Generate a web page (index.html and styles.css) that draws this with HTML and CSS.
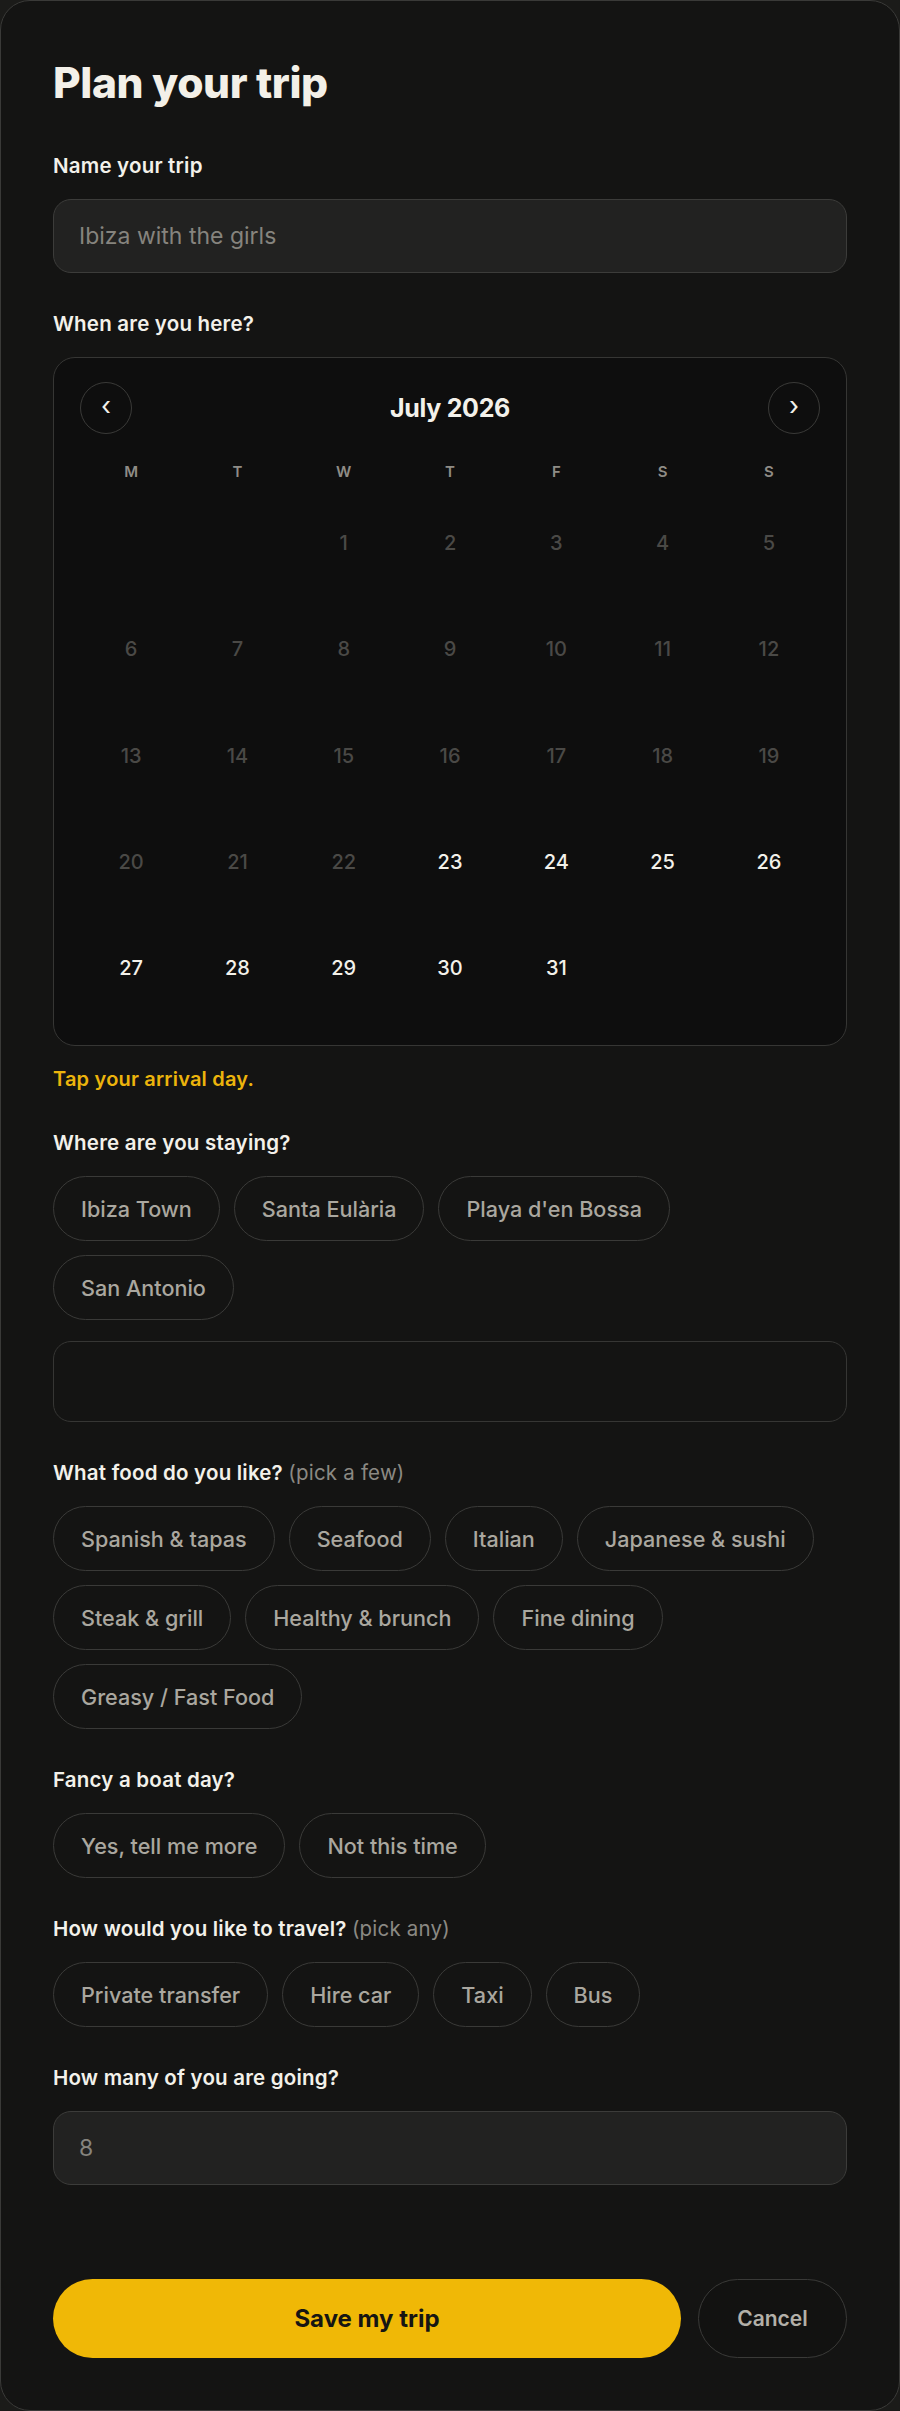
FILE: index.html
```html
<!DOCTYPE html>
<html lang="en">
<head>
  <meta charset="UTF-8">
  <meta name="viewport" content="width=device-width, initial-scale=1">
  <title>Plan your trip</title>
  <link rel="stylesheet" href="styles.css">
</head>
<body>

  <form class="card">
    <h1>Plan your trip</h1>

    <div class="field">
      <label for="trip-name">Name your trip</label>
      <input id="trip-name" class="input" type="text" placeholder="Ibiza with the girls">
    </div>

    <div class="field">
      <label>When are you here?</label>
      <div class="calendar">
        <div class="cal-head">
          <button type="button" class="cal-nav">&lsaquo;</button>
          <span class="cal-month">July 2026</span>
          <button type="button" class="cal-nav">&rsaquo;</button>
        </div>
        <div class="cal-grid">
          <span class="dow">M</span><span class="dow">T</span><span class="dow">W</span><span class="dow">T</span><span class="dow">F</span><span class="dow">S</span><span class="dow">S</span>

          <span></span><span></span>
          <span class="day past">1</span><span class="day past">2</span><span class="day past">3</span><span class="day past">4</span><span class="day past">5</span>
          <span class="day past">6</span><span class="day past">7</span><span class="day past">8</span><span class="day past">9</span><span class="day past">10</span><span class="day past">11</span><span class="day past">12</span>
          <span class="day past">13</span><span class="day past">14</span><span class="day past">15</span><span class="day past">16</span><span class="day past">17</span><span class="day past">18</span><span class="day past">19</span>
          <span class="day past">20</span><span class="day past">21</span><span class="day past">22</span><span class="day">23</span><span class="day">24</span><span class="day">25</span><span class="day">26</span>
          <span class="day">27</span><span class="day">28</span><span class="day">29</span><span class="day">30</span><span class="day">31</span>
        </div>
      </div>
      <p class="hint">Tap your arrival day.</p>
    </div>

    <div class="field">
      <label>Where are you staying?</label>
      <div class="chips">
        <button type="button" class="chip">Ibiza Town</button>
        <button type="button" class="chip">Santa Eulària</button>
        <button type="button" class="chip">Playa d'en Bossa</button>
        <button type="button" class="chip">San Antonio</button>
      </div>
      <input class="input input-plain" type="text">
    </div>

    <div class="field">
      <label>What food do you like? <span class="sub">(pick a few)</span></label>
      <div class="chips">
        <button type="button" class="chip">Spanish &amp; tapas</button>
        <button type="button" class="chip">Seafood</button>
        <button type="button" class="chip">Italian</button>
        <button type="button" class="chip">Japanese &amp; sushi</button>
        <button type="button" class="chip">Steak &amp; grill</button>
        <button type="button" class="chip">Healthy &amp; brunch</button>
        <button type="button" class="chip">Fine dining</button>
        <button type="button" class="chip">Greasy / Fast Food</button>
      </div>
    </div>

    <div class="field">
      <label>Fancy a boat day?</label>
      <div class="chips">
        <button type="button" class="chip">Yes, tell me more</button>
        <button type="button" class="chip">Not this time</button>
      </div>
    </div>

    <div class="field">
      <label>How would you like to travel? <span class="sub">(pick any)</span></label>
      <div class="chips">
        <button type="button" class="chip">Private transfer</button>
        <button type="button" class="chip">Hire car</button>
        <button type="button" class="chip">Taxi</button>
        <button type="button" class="chip">Bus</button>
      </div>
    </div>

    <div class="field">
      <label for="group-size">How many of you are going?</label>
      <input id="group-size" class="input" type="number" placeholder="8">
    </div>

    <div class="actions">
      <button type="submit" class="btn btn-save">Save my trip</button>
      <button type="button" class="btn btn-cancel">Cancel</button>
    </div>
  </form>

</body>
</html>
```

FILE: styles.css
```css
* {
  box-sizing: border-box;
}
body {
  margin: 0;
  background: #1b1b19;
  font-family: Inter, 'Noto Sans', sans-serif;
  color: #f3f1ea;
}
button,
input {
  font-family: inherit;
}
.card {
  width: 900px;
  min-height: 2411px;
  padding: 52px;
  background: #141413;
  border: 1.5px solid #3a3a38;
  border-radius: 30px;
  display: flex;
  flex-direction: column;
  gap: 38px;
}
h1 {
  margin: 0 0 2px;
  font-size: 42.5px;
  line-height: 60px;
  font-weight: 800;
  letter-spacing: -0.4px;
  color: #f3f0e8;
}
.field {
  display: flex;
  flex-direction: column;
}
label {
  font-size: 20.5px;
  line-height: 26px;
  font-weight: 600;
  letter-spacing: 0.2px;
  margin-bottom: 20px;
}
.sub {
  font-weight: 400;
  color: #8b8983;
}
.input {
  height: 74px;
  padding: 0 25px;
  background: #222221;
  border: 1.5px solid #3c3c3a;
  border-radius: 18px;
  font-size: 23px;
  color: #f3f1ea;
  outline: none;
}
.input::placeholder {
  color: #86847e;
}
.input-plain {
  height: 81px;
  margin-top: 21px;
  background: #141413;
  border-color: #363634;
}

/* calendar */
.calendar {
  background: #0e0e0e;
  border: 1.5px solid #363634;
  border-radius: 22px;
  padding: 24px;
}
.cal-head {
  display: flex;
  align-items: center;
  justify-content: space-between;
  margin: 0 2px 28px;
}
.cal-nav {
  width: 52px;
  height: 52px;
  border-radius: 50%;
  border: 1.5px solid #3a3a38;
  background: transparent;
  color: #f3f1ea;
  font-size: 26px;
  line-height: 1;
  padding: 0 0 4px;
  cursor: pointer;
}
.cal-month {
  font-size: 25px;
  font-weight: 700;
  letter-spacing: -0.3px;
}
.cal-grid {
  display: grid;
  grid-template-columns: repeat(7, 1fr);
}
.dow {
  text-align: center;
  font-size: 15px;
  line-height: 20px;
  font-weight: 600;
  color: #8f8c86;
  margin-bottom: 8px;
}
.day {
  aspect-ratio: 1;
  display: flex;
  align-items: center;
  justify-content: center;
  font-size: 20px;
  font-weight: 500;
  color: #f3f1ea;
  cursor: pointer;
}
.day.past {
  color: #4a4946;
  cursor: default;
}
.hint {
  margin: 20px 0 0;
  font-size: 20px;
  line-height: 26px;
  font-weight: 600;
  letter-spacing: 0.2px;
  color: #ecb40c;
}

/* option chips */
.chips {
  display: flex;
  flex-wrap: wrap;
  gap: 14px;
}
.chip {
  height: 65px;
  padding: 0 27px;
  background: transparent;
  border: 1.5px solid #3a3a38;
  border-radius: 999px;
  font-size: 21.6px;
  font-weight: 500;
  color: #aaa79f;
  cursor: pointer;
}

/* footer buttons */
.actions {
  display: flex;
  gap: 17px;
  margin-top: 56px;
}
.btn {
  height: 79px;
  border-radius: 40px;
  font-size: 24px;
  cursor: pointer;
}
.btn-save {
  flex: 1;
  border: none;
  background: #f0b806;
  color: #161513;
  font-weight: 700;
}
.btn-cancel {
  width: 149px;
  background: #121211;
  border: 1.5px solid #3a3a38;
  color: #b3b0a8;
  font-weight: 600;
  font-size: 21px;
}
```
